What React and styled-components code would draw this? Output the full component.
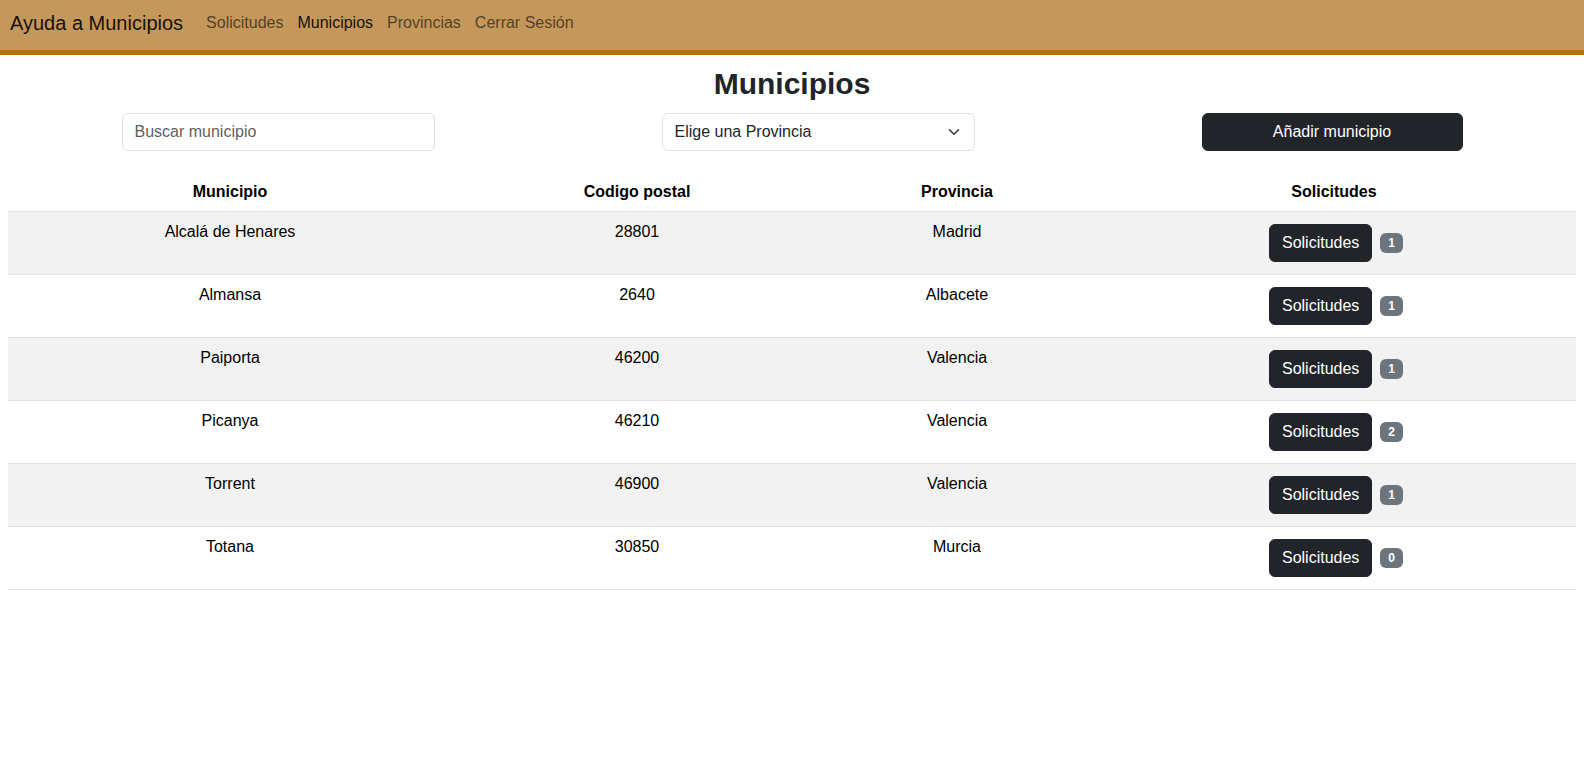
import React from "react";
import styled, { createGlobalStyle } from "styled-components";

const municipios = [
  { id: 0, nombre: "Alcalá de Henares", cp: "28801", provincia: "Madrid", solicitudes: 1 },
  { id: 1, nombre: "Almansa", cp: "2640", provincia: "Albacete", solicitudes: 1 },
  { id: 2, nombre: "Paiporta", cp: "46200", provincia: "Valencia", solicitudes: 1 },
  { id: 3, nombre: "Picanya", cp: "46210", provincia: "Valencia", solicitudes: 2 },
  { id: 4, nombre: "Torrent", cp: "46900", provincia: "Valencia", solicitudes: 1 },
  { id: 5, nombre: "Totana", cp: "30850", provincia: "Murcia", solicitudes: 0 },
];

const links = [
  { id: 0, label: "Solicitudes", active: false },
  { id: 1, label: "Municipios", active: true },
  { id: 2, label: "Provincias", active: false },
  { id: 3, label: "Cerrar Sesión", active: false },
];

const GlobalStyle = createGlobalStyle`
  body {
    margin: 0;
    background: #fff;
    color: #212529;
    font-family: "Liberation Sans", Arial, sans-serif;
    font-size: 16px;
  }
  * {
    box-sizing: border-box;
  }
`;

const MunicipiosPage = () => {
  return (
    <>
      <GlobalStyle />
      <Navbar>
        <Brand>Ayuda a Municipios</Brand>
        <NavList>
          {links.map((link) => (
            <NavLink key={link.id} $active={link.active}>
              {link.label}
            </NavLink>
          ))}
        </NavList>
      </Navbar>
      <Main>
        <Title>Municipios</Title>
        <Controls>
          <SearchInput placeholder="Buscar municipio" />
          <SelectBox>
            <span>Elige una Provincia</span>
            <svg width="16" height="12" viewBox="0 0 16 16" fill="none">
              <path
                d="m2 5 6 6 6-6"
                stroke="#343a40"
                strokeWidth="2"
                strokeLinecap="round"
                strokeLinejoin="round"
              />
            </svg>
          </SelectBox>
          <AddButton>Añadir municipio</AddButton>
        </Controls>
        <Table>
          <colgroup>
            <col style={{ width: "444px" }} />
            <col style={{ width: "370px" }} />
            <col style={{ width: "270px" }} />
            <col />
          </colgroup>
          <thead>
            <tr>
              <Th>Municipio</Th>
              <Th>Codigo postal</Th>
              <Th>Provincia</Th>
              <Th>Solicitudes</Th>
            </tr>
          </thead>
          <tbody>
            {municipios.map((m, i) => (
              <Row key={m.id} $striped={i % 2 === 0}>
                <Td>{m.nombre}</Td>
                <Td>{m.cp}</Td>
                <Td>{m.provincia}</Td>
                <Td>
                  <ActionCell>
                    <DarkButton>Solicitudes</DarkButton>
                    <Badge>{m.solicitudes}</Badge>
                  </ActionCell>
                </Td>
              </Row>
            ))}
          </tbody>
        </Table>
      </Main>
    </>
  );
};

export default MunicipiosPage;

const Navbar = styled.nav`
  display: flex;
  align-items: center;
  height: 55px;
  padding: 0 10px 5px;
  background: #c4975a;
  border-bottom: 5px solid #b87100;
`;

const Brand = styled.span`
  font-size: 20px;
  line-height: 30px;
  color: rgba(0, 0, 0, 0.9);
  margin-right: 16px;
`;

const NavList = styled.div`
  display: flex;
  align-items: center;
`;

const NavLink = styled.span`
  padding: 0 7px;
  font-size: 16px;
  line-height: 24px;
  color: ${(p) => (p.$active ? "rgba(0, 0, 0, 0.9)" : "rgba(0, 0, 0, 0.6)")};
`;

const Main = styled.main`
  padding: 0 8px;
`;

const Title = styled.h2`
  margin: 10px 0;
  text-align: center;
  font-size: 30px;
  line-height: 38px;
  font-weight: 700;
  color: #212529;
`;

const Controls = styled.div`
  display: flex;
  justify-content: center;
  gap: 227px;
  margin-bottom: 20px;
`;

const SearchInput = styled.input`
  width: 313px;
  height: 38px;
  padding: 6px 12px;
  border: 1px solid #dee2e6;
  border-radius: 6px;
  font-family: inherit;
  font-size: 16px;
  color: #212529;
  outline: none;
  &::placeholder {
    color: rgba(33, 37, 41, 0.75);
  }
`;

const SelectBox = styled.div`
  display: flex;
  align-items: center;
  justify-content: space-between;
  width: 313px;
  height: 38px;
  padding: 6px 12px;
  border: 1px solid #dee2e6;
  border-radius: 6px;
  font-size: 16px;
  color: #212529;
`;

const AddButton = styled.button`
  width: 261px;
  height: 38px;
  border: 1px solid #212529;
  border-radius: 6px;
  background: #212529;
  color: #fff;
  font-family: inherit;
  font-size: 16px;
`;

const Table = styled.table`
  width: 100%;
  border-collapse: collapse;
  table-layout: fixed;
  color: #000;
`;

const Th = styled.th`
  padding: 9px 8px 7px;
  line-height: 24px;
  font-weight: 700;
  text-align: center;
  border-bottom: 1px solid #dee2e6;
`;

const Row = styled.tr`
  background: ${(p) => (p.$striped ? "#f2f2f2" : "#fff")};
`;

const Td = styled.td`
  padding: 8px;
  line-height: 24px;
  text-align: center;
  vertical-align: top;
  border-bottom: 1px solid #dee2e6;
`;

const ActionCell = styled.div`
  display: flex;
  align-items: center;
  justify-content: center;
`;

const DarkButton = styled.button`
  margin: 4px;
  height: 38px;
  padding: 6px 12px;
  border: 1px solid #212529;
  border-radius: 6px;
  background: #212529;
  color: #fff;
  font-family: inherit;
  font-size: 16px;
  line-height: 24px;
`;

const Badge = styled.span`
  margin-left: 4px;
  padding: 4px 8px;
  border-radius: 6px;
  background: #6c757d;
  color: #fff;
  font-size: 12px;
  font-weight: 700;
  line-height: 12px;
`;
